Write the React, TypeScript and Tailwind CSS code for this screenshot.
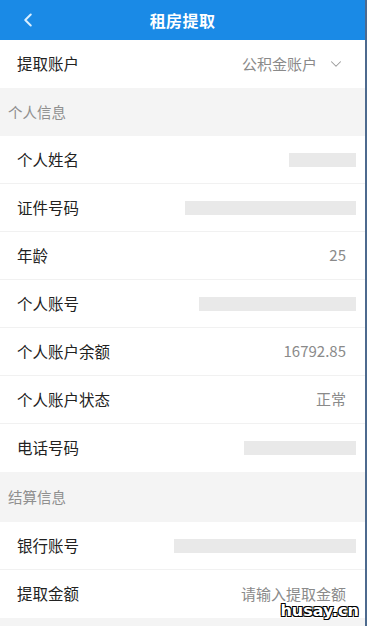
import { ChevronDown, ChevronLeft } from 'lucide-react';

const font = { fontFamily: "'Noto Sans CJK SC', 'Noto Sans', sans-serif" };

type Row = { label: string; value?: string; mask?: string };

const personal: Row[] = [
    { label: '个人姓名', mask: 'w-[67px]' },
    { label: '证件号码', mask: 'w-[171px]' },
    { label: '年龄', value: '25' },
    { label: '个人账号', mask: 'w-[157px]' },
    { label: '个人账户余额', value: '16792.85' },
    { label: '个人账户状态', value: '正常' },
    { label: '电话号码', mask: 'w-[112px]' },
];

const settle: Row[] = [
    { label: '银行账号', mask: 'w-[182px]' },
    { label: '提取金额', value: '请输入提取金额' },
];

function InfoRow({ row, last }: { row: Row; last?: boolean }) {
    return (
        <div className={`h-[48px] shrink-0 flex items-center justify-between pl-[17px] pr-[19px] bg-white ${last ? '' : 'border-b border-[#f1f1f1]'}`}>
            <span className="text-[15.5px] text-[#222]">{row.label}</span>
            {row.mask ? (
                <div className={`h-[14px] bg-[#e9e9e9] -mr-[10px] ${row.mask}`} />
            ) : (
                <span className="text-[15px] text-[#8a8a8a]">{row.value}</span>
            )}
        </div>
    );
}

function Section({ title, tall }: { title: string; tall?: boolean }) {
    return (
        <div className={`${tall ? 'h-[50px]' : 'h-[48px]'} shrink-0 flex items-center pl-[8px] bg-[#f4f4f4]`}>
            <span className="text-[14.5px] text-[#8f8f8f]">{title}</span>
        </div>
    );
}

export default function App() {
    return (
        <div className="w-[367px] h-[626px] flex overflow-hidden" style={font}>
            <div className="flex-1 flex flex-col bg-[#f4f4f4] relative">
                {/* Header */}
                <div className="h-[40px] shrink-0 bg-[#1a8ae6] flex items-center relative">
                    <ChevronLeft size={22} strokeWidth={2.2} color="#d9efff" className="absolute left-[17px]" />
                    <span className="mx-auto text-[16px] font-bold text-white tracking-wide">租房提取</span>
                </div>

                {/* Account picker */}
                <div className="h-[48px] shrink-0 flex items-center justify-between pl-[17px] pr-[20px] bg-white">
                    <span className="text-[15.5px] text-[#222]">提取账户</span>
                    <div className="flex items-center gap-[10px]">
                        <span className="text-[15px] text-[#8a8a8a]">公积金账户</span>
                        <ChevronDown size={18} strokeWidth={1.4} color="#999" />
                    </div>
                </div>

                <Section title="个人信息" />
                {personal.map((r, i) => (
                    <InfoRow key={r.label} row={r} last={i === personal.length - 1} />
                ))}

                <Section title="结算信息" tall />
                {settle.map((r, i) => (
                    <InfoRow key={r.label} row={r} last={i === settle.length - 1} />
                ))}

                {/* Watermark */}
                <span
                    className="absolute right-[6px] bottom-[7px] text-[16px] font-bold text-white leading-none [text-shadow:1px_1px_0_#000,-1px_-1px_0_#000,1px_-1px_0_#000,-1px_1px_0_#000]"
                    style={{ fontFamily: "'DejaVu Sans', sans-serif" }}
                >
                    husay.cn
                </span>
            </div>
            <div className="w-[2px] bg-[#4d6a8e]" />
        </div>
    );
}
